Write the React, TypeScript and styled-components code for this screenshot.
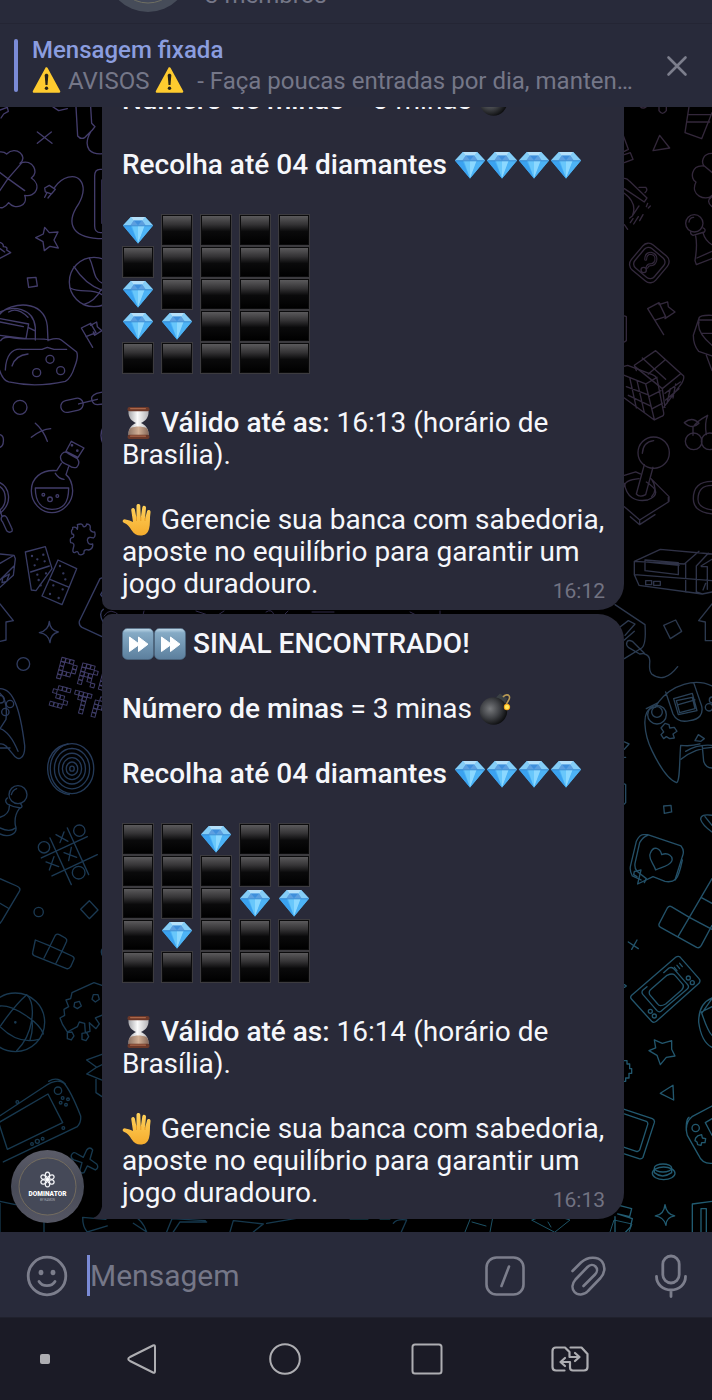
import React from "react";
import styled, { createGlobalStyle } from "styled-components";

const colors = {
  panel: "#282a3a",
  bubble: "#292a39",
  accent: "#7b8bd6",
  accentText: "#8b9ddf",
  muted: "#757788",
  text: "#f6f7fb",
  nav: "#1b1b26",
};

const GlobalStyle = createGlobalStyle`
  * { box-sizing: border-box; }
  html, body { margin: 0; background: #000; }
  body { font-family: Roboto, "Liberation Sans", sans-serif; color: ${colors.text}; }
`;

const Screen = styled.div`
  display: flex;
  flex-direction: column;
  height: 100vh;
  overflow: hidden;
`;

const ChatHeader = styled.header`
  display: flex;
  align-items: flex-end;
  flex: none;
  gap: 15px;
  height: 24px;
  padding-left: 106px;
  overflow: hidden;
  background: ${colors.panel};
  border-bottom: 1px solid #242534;
`;

const HeaderAvatar = styled.svg`
  display: block;
  flex: none;
  width: 84px;
  height: 84px;
  margin-bottom: 11px;
`;

const MemberCount = styled.p`
  margin: 0 0 14px;
  font-size: 24px;
  line-height: 28px;
  color: ${colors.muted};
`;

const Pinned = styled.section`
  display: flex;
  align-items: center;
  flex: none;
  height: 83px;
  padding: 0 23px 0 14px;
  background: ${colors.panel};
`;

const PinnedBar = styled.span`
  flex: none;
  width: 4px;
  height: 53px;
  margin-right: 14px;
  border-radius: 2px;
  background: ${colors.accent};
`;

const PinnedBody = styled.div`
  flex: 1;
  min-width: 0;
`;

const PinnedTitle = styled.h2`
  margin: 0;
  font-size: 24px;
  font-weight: 500;
  line-height: 31px;
  color: ${colors.accentText};
`;

const PinnedText = styled.p`
  margin: 0;
  overflow: hidden;
  font-size: 24px;
  line-height: 31px;
  white-space: pre;
  color: ${colors.muted};
`;

const IconButton = styled.button<{ $size: number }>`
  display: block;
  flex: none;
  width: ${(p) => p.$size}px;
  height: ${(p) => p.$size}px;
  padding: 0;
  border: 0;
  background: none;
  color: #7c7e8c;
  cursor: pointer;

  svg {
    display: block;
    width: 100%;
    height: 100%;
    overflow: visible;
  }
`;

const Chat = styled.main`
  position: relative;
  display: flex;
  flex: 1;
  flex-direction: column;
  justify-content: flex-end;
  min-height: 0;
  overflow: hidden;
  padding: 0 88px 9px 11px;
  background: #000;
`;

const Wallpaper = styled.svg`
  position: absolute;
  inset: 0;
  width: 100%;
  height: 100%;
`;

const MessageRow = styled.article`
  position: relative;
  display: flex;
  flex: none;
  align-items: flex-end;
  gap: 18px;
`;

const AvatarSlot = styled.div`
  flex: none;
  width: 73px;

  svg {
    display: block;
    width: 73px;
    height: 73px;
  }
`;

const Bubble = styled.div<{ $last?: boolean }>`
  position: relative;
  flex: 1;
  min-width: 0;
  max-width: 522px;
  margin-bottom: 4px;
  padding: 14px 16px 10px 20px;
  border-radius: 10px 26px 26px ${(p) => (p.$last ? "0" : "10px")};
  background: ${colors.bubble};
`;

const Tail = styled.svg`
  position: absolute;
  left: -9px;
  bottom: 0;
  width: 10px;
  height: 20px;
`;

const Paragraph = styled.p`
  margin: 0 0 33px;
  font-size: 28px;
  line-height: 32px;

  &:last-of-type {
    margin-bottom: 0;
  }

  strong {
    font-weight: 500;
  }
`;

const Board = styled.div`
  display: grid;
  grid-template-columns: repeat(5, 32px);
  column-gap: 7px;
  margin-bottom: 33px;

  svg {
    display: block;
    width: 32px;
    height: 32px;
  }
`;

const Inline = styled.svg`
  display: inline-block;
  width: 32px;
  height: 32px;
  margin: -4px 0;
  vertical-align: -3px;
`;

const WarningIcon = styled.svg`
  display: inline-block;
  width: 30px;
  height: 28px;
  margin: -3px 0;
  vertical-align: -2px;
`;

const Time = styled.time`
  position: absolute;
  right: 19px;
  bottom: 7px;
  font-size: 21px;
  line-height: 24px;
  color: #727382;
`;

const Composer = styled.form`
  display: flex;
  align-items: center;
  flex: none;
  gap: 43px;
  height: 86px;
  padding: 2px 21px 0 27px;
  background: ${colors.panel};
  border-bottom: 1px solid #20212d;
`;

const Field = styled.div`
  display: flex;
  align-items: center;
  flex: 1;
  min-width: 0;
  margin-left: -23px;
`;

const Caret = styled.span`
  flex: none;
  width: 3px;
  height: 41px;
  background: ${colors.accent};
`;

const Input = styled.input`
  flex: 1;
  min-width: 0;
  height: 41px;
  padding: 0;
  border: 0;
  outline: 0;
  background: none;
  font: 400 30px/40px Roboto, "Liberation Sans", sans-serif;
  color: ${colors.text};

  &::placeholder {
    color: ${colors.muted};
    opacity: 1;
  }
`;

const NavBar = styled.nav`
  display: grid;
  grid-template-columns: 1fr 2fr 2fr 2fr 2fr 1fr;
  flex: none;
  align-items: center;
  justify-items: center;
  height: 82px;
  background: ${colors.nav};

  button {
    color: #aeaeb2;
  }
`;

const NavDot = styled.span`
  width: 10px;
  height: 10px;
  margin-left: 18px;
  border-radius: 2px;
  background: #aeaeb2;
`;

function Gem() {
  return (
    <>
      <path d="M9 3h14l8 8.500-15 18L1 11.500z" fill="#4bb2f6" />
      <path d="M9 3h14l8 8.500H1z" fill="#7cc4f3" />
      <path d="M9 3l2.500 3.500h9L23 3z" fill="#b5e0fa" />
      <path d="M11.500 6.500L8 11.500h8zM20.500 6.500l3.500 5h-8z" fill="#5d9fdf" />
      <path d="M11.500 6.500h9L16 11.500z" fill="#3f8edb" />
      <path d="M9 3l2.500 3.500-3.500 5H1zM23 3l-2.500 3.500 3.500 5h7z" fill="#85cdf6" />
      <path d="M10 12h6v17.500z" fill="#68c7fb" />
      <path d="M16 12h6.500L16 29.500z" fill="#8bd8ff" />
      <path d="M1 11.500h7.500L16 29.500z" fill="#3aa2f0" />
      <path d="M31 11.500h-7.500L16 29.500z" fill="#4db3f5" />
      <path d="M1.500 11.800h29" stroke="#3985cc" strokeWidth=".8" />
    </>
  );
}

function Diamond() {
  return (
    <Inline viewBox="0 0 32 32" role="img" aria-label="diamante">
      <Gem />
    </Inline>
  );
}

function FastForward() {
  return (
    <Inline viewBox="0 0 32 32" role="img" aria-label="avançar">
      <defs>
        <linearGradient id="ff" x2="0" y2="1">
          <stop offset="0" stopColor="#c3dcec" />
          <stop offset=".14" stopColor="#85aac5" />
          <stop offset="1" stopColor="#5c7f9d" />
        </linearGradient>
      </defs>
      <rect x=".5" y=".5" width="31" height="31" rx="5" fill="url(#ff)" stroke="#4d6a83" strokeWidth=".6" />
      <path
        d="M7.500 9v14.500l9-6.500v6.500l9.500-7.300L16.500 9v6.500z"
        fill="#fff"
        stroke="#fff"
        strokeLinejoin="round"
      />
    </Inline>
  );
}

function Bomb() {
  return (
    <Inline viewBox="0 0 32 32" role="img" aria-label="bomba">
      <defs>
        <radialGradient id="bomb" cx=".38" cy=".42" r=".62">
          <stop offset="0" stopColor="#77797c" />
          <stop offset=".55" stopColor="#3f4145" />
          <stop offset="1" stopColor="#0e0f11" />
        </radialGradient>
      </defs>
      <path d="M17 4.500l4-4 7 5-2 6z" fill="#3a4044" />
      <circle cx="14.500" cy="18" r="13.700" fill="url(#bomb)" />
      <path d="M24 4c2-3 7-3 6.500 1-.4 3-4 5-3 8" fill="none" stroke="#b89a54" strokeWidth="1.600" />
      <circle cx="28" cy="14" r="3.200" fill="#f6a71c" />
      <circle cx="28" cy="14" r="2.200" fill="#ffe95c" />
    </Inline>
  );
}

function Hourglass() {
  return (
    <Inline viewBox="0 0 32 32" role="img" aria-label="ampulheta">
      <defs>
        <linearGradient id="glass" x2="1">
          <stop offset="0" stopColor="#a6a6aa" />
          <stop offset=".45" stopColor="#fafafa" />
          <stop offset="1" stopColor="#b5b4b8" />
        </linearGradient>
        <linearGradient id="sand" x2="1">
          <stop offset="0" stopColor="#8f7466" />
          <stop offset=".5" stopColor="#d0ae94" />
          <stop offset="1" stopColor="#87695a" />
        </linearGradient>
      </defs>
      <path d="M6.500 4c-.5 7 3.500 10 7.500 12-4 2-8 5-7.500 12h20c.5-7-3.500-10-7.500-12 4-2 8-5 7.500-12z" fill="url(#glass)" />
      <path d="M6.500 28c-.3-3 .3-5 2-7 5-2 11-2 16 0 1.700 2 2.300 4 2 7z" fill="url(#sand)" />
      <rect x="5.500" y="0" width="22" height="4.200" rx="2" fill="#6b3829" />
      <rect x="8" y="1" width="16" height="1.200" rx=".6" fill="#a9664a" />
      <rect x="5.500" y="27.800" width="22" height="4.200" rx="2" fill="#6b3829" />
      <rect x="8" y="28.600" width="16" height="1.200" rx=".6" fill="#a9664a" />
    </Inline>
  );
}

function Hand() {
  return (
    <Inline viewBox="0 0 32 32" role="img" aria-label="mão levantada">
      <defs>
        <linearGradient id="hand" x2="0" y2="1">
          <stop offset="0" stopColor="#ffd25c" />
          <stop offset="1" stopColor="#f5ac2d" />
        </linearGradient>
      </defs>
      <path
        d="M11 18L9.300 6.500c-.5-3 3-3.500 3.600-.8L14.500 14V2c0-2.600 3.700-2.600 3.800 0l.5 12 1.500-10.500c.4-2.600 4-2 3.700.6L23 15l2-7.500c.7-2.400 4-1.600 3.500.9C27.500 14 28.500 20 27 25c-1.300 4.500-4 6.500-8.500 6.500-4 0-6.500-1.500-8.700-5-2-3-3.500-6-8-7.800-2.300-1-.8-3.700 1.500-3.300C6.500 15.800 9 17 11 18z"
        fill="url(#hand)"
      />
      <path d="M14.500 13v4M18.800 13v4M23 14v3" stroke="#e79b25" strokeWidth=".9" />
    </Inline>
  );
}

function Warning() {
  return (
    <WarningIcon viewBox="0 0 30 28" role="img" aria-label="atenção">
      <path d="M14.500 2.500L2 25.500h25z" fill="#fecb2f" stroke="#fecb2f" strokeWidth="2.600" strokeLinejoin="round" />
      <path d="M12.700 9.500c0-2.200 3.600-2.200 3.600 0L15.500 19h-2z" fill="#26221a" />
      <circle cx="14.500" cy="22.300" r="1.700" fill="#26221a" />
    </WarningIcon>
  );
}

function Tile() {
  return (
    <svg viewBox="0 0 32 32" role="img" aria-label="fechado">
      <defs>
        <linearGradient id="tile" x2="0" y2="1">
          <stop offset="0" stopColor="#5b5a5c" />
          <stop offset=".3" stopColor="#343335" />
          <stop offset=".55" stopColor="#0a0a0b" />
          <stop offset="1" stopColor="#000" />
        </linearGradient>
      </defs>
      <rect x=".5" y=".5" width="31" height="31" fill="#0b0b0c" stroke="#3c3b3f" />
      <rect x="2" y="2" width="28" height="28" fill="url(#tile)" />
    </svg>
  );
}

function GameBoard({ rows }: { rows: string[] }) {
  return (
    <Board>
      {rows.join("").split("").map((cell, i) =>
        cell === "D" ? (
          <svg key={i} viewBox="0 0 32 32" role="img" aria-label="diamante">
            <Gem />
          </svg>
        ) : (
          <Tile key={i} />
        )
      )}
    </Board>
  );
}

function ChannelAvatar() {
  return (
    <svg viewBox="0 0 73 73" role="img" aria-label="Dominator">
      <defs>
        <linearGradient id="avatar" x2="0" y2="1">
          <stop offset="0" stopColor="#5b5c68" />
          <stop offset=".5" stopColor="#474a57" />
          <stop offset="1" stopColor="#555663" />
        </linearGradient>
      </defs>
      <circle cx="36.500" cy="36.500" r="36.500" fill="url(#avatar)" />
      <circle cx="36.500" cy="36.500" r="28.500" fill="#454958" stroke="#7d735f" strokeWidth=".8" />
      <g fill="none" stroke="#f2f3f6" strokeWidth="1.200">
        {[0, 60, 120, 180, 240, 300].map((a) => (
          <ellipse key={a} cx="36.500" cy="25.500" rx="2.300" ry="3.300" transform={`rotate(${a} 36.500 29.500)`} />
        ))}
      </g>
      <circle cx="36.500" cy="29.500" r="1.200" fill="#fff" />
      <text
        x="36.500"
        y="45.500"
        textAnchor="middle"
        fill="#fff"
        fontFamily="Roboto, sans-serif"
        fontSize="6.500"
        fontWeight="900"
      >
        DOMINATOR
      </text>
      <text x="36.500" y="50.500" textAnchor="middle" fill="#a9abb5" fontFamily="Roboto, sans-serif" fontSize="3">
        BY RAMON
      </text>
    </svg>
  );
}

/* Pixel letters of the "PRESS START" doodle. */
const pixelLetters: { x: number; y: number; rows: string[] }[] = [
  { x: 0, y: 0, rows: ["1110", "1001", "1001", "1110", "1000"] },
  { x: 5, y: 0, rows: ["1110", "1001", "1110", "1010", "1001"] },
  { x: 10, y: 0, rows: ["111", "100", "110", "100", "111"] },
  { x: 0, y: 6.5, rows: ["0111", "1000", "0110", "0001", "1110"] },
  { x: 5, y: 6.5, rows: ["1111", "0110", "0010", "0010", "0010"] },
  { x: 10, y: 6.5, rows: ["0110", "1001", "1111", "1001", "1001"] },
];

function Doodles() {
  return (
    <Wallpaper viewBox="0 107 712 1125" preserveAspectRatio="xMidYMax slice" aria-hidden="true">
      <defs>
        {[
          ["l1", "#433c6b", "#413c69"],
          ["l2", "#413c69", "#1b3953"],
          ["l3", "#1b3953", "#15384d"],
          ["r1", "#33273a", "#322a3e"],
          ["r2", "#322a3e", "#235068"],
          ["r3", "#235068", "#215c72"],
        ].map(([id, from, to]) => (
          <linearGradient key={id} id={id} gradientUnits="userSpaceOnUse" x1="0" y1="0" x2="0" y2="1140">
            <stop offset="0" stopColor={from} />
            <stop offset="1" stopColor={to} />
          </linearGradient>
        ))}
      </defs>
      <g fill="none" strokeWidth="4" strokeLinejoin="round" strokeLinecap="round">
        <g stroke="url(#l1)" transform="translate(0 100) scale(.3333)">
          <path d="M0 30l22-8 3 12-14 8-8 12M158 20l18 12 26-6M228 20l5 88q10 12 22 4l22-22 8-10-10-10-3-50M272 96c-14 24-14 40-4 54q16 18 60 8" />
          <path d="M112 96l44 34M154 96l-42 34" />
          <path d="M-10 236c-60-60 8-96 30-74 28-28 66 8 40 28 40-16 58 30 34 44 32 20 14 60-20 52 12 32-30 46-48 22-24 34-50 4-36-20M24 236l40-46M24 236l50 36M24 236l-34-26M24 236l-30 44" />
          <path d="M134 264l14-8 18 12-12 14-18-6zM140 280l-6 12M152 284l-8 10M164 262c24-34 60-40 76-22 18 22 8 50-4 72-44 64-14 104 74 104M320 208h-20q-16 0-16 20v150q0 20 18 20h18M320 240h-14v130h14" />
          <path d="M134 382l14 16 26-2-12 24 13 24-25-5-17 13-4-27-22-12 23-11z" />
          <path d="M-4 426q16 4 14 14 14 0 10 10l12 8-34 18M0 446l14 10M82 534l26-2 4 26-26 4z" />
          <circle cx="282" cy="546" r="74" />
          <path d="M222 500c20 32 46 58 86 72M268 474c16 30 10 64 40 76M210 564c36 18 64-2 96 20M250 614q36-10 54-46" />
          <path d="M0 642c32-36 134-46 142 36l2 44M0 636c36-20 100-14 106 46v38M26 636c16-10 36-6 58 16M0 656l86 16-8 44-78-10M0 666l70 14M84 682l20 10M2 722q6-12 28-10c50 10 90 0 118 8q24-8 36 0l46 36q6 14-6 44-10 34-28 44-90 20-170 2-20-6-30-44M16 810c2-44 20-66 50-62h60l16-6 20 6h38M36 798q10-32 48-36" />
          <circle cx="150" cy="778" r="12" />
          <circle cx="110" cy="818" r="12" />
          <circle cx="182" cy="812" r="12" />
          <path d="M278 742l-34-58 28-14 16 28-30 12M272 676l18-10 2 14 14 12-22 14-4-10" />
          <circle cx="60" cy="922" r="21" />
          <rect x="182" y="898" width="68" height="36" rx="18" transform="rotate(-12 216 916)" />
          <path d="M236 912l56-14M310 876l-20 4q-22 8-12 26 4 8 14 8l18-2M94 1012q30-24 58-26M106 970q24 20 36 54M310 980q-14 26 0 54M0 1004q12 4 10 20 0 14-10 18" />
          <path d="M214 1024l38 20-18 28-36-18zM182 1068q8-18 22-8l28 16q10 14-2 26-12 4-24-6-28-8-24-28M184 1090l-14 22M206 1100l-8 24M170 1112c-48-4-76 24-76 60s28 66 62 66 62-32 62-66q-2-34-20-48M106 1164h100c0 50-20 64-50 64s-50-20-50-64M166 1120q10 16 26 18" />
          <circle cx="216" cy="1036" r="2" />
          <circle cx="232" cy="1052" r="2" />
          <circle cx="130" cy="1184" r="4" />
          <circle cx="150" cy="1198" r="7" />
          <circle cx="172" cy="1188" r="4" />
          <path d="M0 1148c28 14 40 60 0 92M0 1160c18 12 24 50 0 70" />
        </g>
        <g stroke="url(#l2)" transform="translate(0 480) scale(.3333)">
          <path d="M0 90l6 20M6 110q-6 8 2 16l12 26q8 8 16 2 2-6-2-12l-14-30q-6-8-14-2M218 142q12-2 14 6 2-8 0-14 16-6 18 6 8 2 10-8 14 0 10 16 4 10 14 8 4 14-4 18-16-6-18 6 2 16 16 12 2 14-12 18-16-4-14 10-8 8-16 2-2-12-12-4-8 0-4-14 6-16-8-16-4-16 8-16 4-10-4-10-4-12 2-14z" />
          <path d="M76 216l60-16 20 66-48 66-14-2zM92 276l56-18M174 240l56 26-44 108-60-26zM150 298l58 24M0 222l42 4 4 10-6 50-40 36M0 250l38-22M0 300l42-42M8 294l20-12-8 22-14 4zM0 372l40 50-22 4v54l-18 4M310 292l-10 4-62 128q-2 12 8 18l60 28M310 330l-8 14 8 10M310 388q-16 12 0 40" />
          {[[96, 228], [112, 238], [130, 224], [104, 256], [134, 244], [112, 284], [116, 300], [138, 280], [122, 316], [180, 258], [190, 280], [196, 298], [160, 316], [188, 328], [150, 342], [176, 354]].map(([x, y]) => (
            <circle key={`${x}-${y}`} cx={x} cy={y} r="1.500" />
          ))}
          <path d="M148 424q2 28 27 32-24 6-25 32-4-26-32-30 28-6 30-34z" />
          <circle cx="70" cy="552" r="19" />
          <g transform="translate(186 532) rotate(15)" strokeWidth="3">
            {pixelLetters.map((l) =>
              l.rows.map((row, r) =>
                row
                  .split("")
                  .map((c, i) =>
                    c === "1" ? (
                      <rect
                        key={`${l.x}-${l.y}-${r}-${i}`}
                        x={(l.x + i) * 13}
                        y={(l.y + r) * 13}
                        width="12"
                        height="12"
                        strokeWidth="3"
                      />
                    ) : null
                  )
              )
            )}
          </g>
          <path d="M0 626c40 0 60 60 74 170 2 40-20 50-34 28L18 798q-10-8-18-6M0 640q24 20 18 78l-18 28M0 746q30 10 54 68M0 804q18 0 30 0" />
          <circle cx="30" cy="672" r="11" />
          <circle cx="16" cy="696" r="11" />
          <circle cx="2" cy="658" r="11" />
          {[68, 55, 42, 30, 18, 7].map((r) => (
            <ellipse key={r} cx="216" cy="866" rx={r * 0.96} ry={r * 1.1} />
          ))}
          <path d="M204 792c-84 12-80 140 4 152" />
          <circle cx="54" cy="944" r="27" />
          <path d="M34 944q4-14 16-18M22 954q-10 8 0 18 18 10 40 12 8-4 0-12M28 974c2 24-14 34-28 38M58 986c-14 18-14 36-12 50 10 26-20 38-46 26M0 1044q30 14 46 0" />
          <circle cx="238" cy="1052" r="17" />
          <circle cx="132" cy="1102" r="17" />
          <circle cx="236" cy="1178" r="19" />
          <path d="M150 1074l64 140M202 1044l64 140M124 1134l138-64M156 1188l136-64M168 1064l36 20M180 1088l12-32M192 1118l38 14M206 1142l8-40M138 1146l38 14M148 1170l14-40" />
        </g>
        <g stroke="url(#l3)" transform="translate(0 860) scale(.3333)">
          <path d="M0 56l50 22q14 6 8 16L6 182l-6 8M0 130l24 14" />
          <circle cx="116" cy="156" r="14" />
          <path d="M268 122l26 28-26 26-26-28zM106 240l44 18 16-32q6-6 12-2l18 10q6 4 4 10l-14 30 30 14q8 4 6 10l-10 22q-6 8-12 6l-96-38q-8-4-6-10zM150 258l-18 36M186 274l-18 36M150 258l36 16M310 262q-12 14 0 28" />
          <circle cx="46" cy="487" r="88" />
          <path d="M0 438c40-4 120 50 130 84M80 404c30 30 20 120-30 168M0 500c30-44 50-70 80-96M0 500c40 40 80 48 116 38M96 480q4 30-6 60" />
          <circle cx="46" cy="487" r="2" />
          <path d="M310 378l-28-10-66 30-4 18-14 4 8 20-14 8 2 18-14 8 8 20 14 22 30-16 6-14 16 4 2 28 14-4-2-26 20 18 10-14-12-18 30-12 6 24M224 428l14-4 6 14-12 8-10-6zM280 404l14 0 4 14-12 8-10-8zM202 518l14-2 6 12-8 12-12-4zM246 520l14-2 6 12-8 12-12-4zM310 582l-50 18 30 22 20-10M290 622l-30 20 50 20M288 658v40l18 12" />
          <path d="M-10 774l140-92q40-30 62-12 20 22 50 98 2 20-10 32L10 906M-4 788l148-86 44 86L22 868zM146 664q26-16 50 8" />
          <circle cx="174" cy="692" r="11" />
          {[[188, 714], [204, 718], [182, 728], [198, 734], [52, 726], [190, 804], [96, 852], [128, 836]].map(([x, y]) => (
            <circle key={`${x}-${y}`} cx={x} cy={y} r="4" />
          ))}
          <circle cx="112" cy="844" r="6" />
          <path d="M214 886q6-14 18-4l18 10 10-22q10-12 18 0l-8 28 20 14q8 12-4 18l-24-12-10 20q-12 4-12-8l6-22-24-8q-10-4-8-14M0 1024l46 10M0 1030v86M132 1080v36M248 1072q0 30 14 44l60-18M248 1072l70 6M310 1040q110 10 130 76M400 1090l40 26M500 1116l16-40 100 6M520 1116l20-30h80M690 1116l10-34 90 10-30 24M800 1090l120-20M1180 1090q10-14 40-10l-16 36" />
        </g>
        <path
          stroke="#302b4b"
          strokeWidth="1"
          d="M104 616q6-10 16 0M144 611l-1 4M196 611l12 4M224 611l-6 4M266 612q6-4 8 3M288 611l-4 4M312 612h22M410 612l6 3M440 611v4"
        />
        <path
          stroke="#1d5265"
          strokeWidth="1"
          d="M465 1232l8-20 20 4-3 16M472 1222l14 4M532 1220l18-6 20 6-15 12zM548 1222l3 5M610 1232l4-12 18 4-3 8M350 1219h18M380 1219h10"
        />
        <g stroke="url(#r1)" transform="translate(615 100) scale(.3333)">
          <path d="M76 20q8 8 18 0M132 20v12q10 16 22 0V20M222 20l-12 78 50 18 31-78M222 44h66M216 66h68M134 106l30 38-50 8zM24 104l16 44-12 6M28 164l18-6 8 20-26 10M24 236q10-4 20 8l52 50-8 12-60-40M72 262l20 0q8 8-2 16M28 280q40 30 24 68l20-30M52 348l-8 6M54 356l-8 12M70 350l-14 22M84 344l-10 18M98 310l-4 10M106 318l-6 6M28 374l10 14" />
          <path d="M291 160c-30 0-32 28-24 38-40-4-42 40-24 48-20 40 30 60 48 40M268 198l24 20M291 290q-20 14 0 30" />
          <circle cx="238" cy="370" r="26" />
          <path d="M222 366q2-14 14-14M228 394q-4 8 6 12l34-10q6-8-4-12M242 408c6 30 2 46-2 74l4 12 47-18M264 398q6 24 27 36M246 474l45-20" />
          <rect x="55" y="440" width="96" height="98" rx="22" transform="rotate(40 103 489)" />
          <rect x="65" y="451" width="76" height="76" rx="16" transform="rotate(40 103 489)" />
          <path d="M92 478q0-18 16-18 18 4 14 22-4 14-16 12-8 0-10 8" strokeWidth="9" />
          <path d="M92 478q0-18 16-18 18 4 14 22-4 14-16 12-8 0-10 8" stroke="#000" strokeWidth="2.500" />
          <circle cx="86" cy="510" r="8" />
          <path d="M146 704l-48-78 34-18 20 42-30 10M132 614l26-8 2 14 20 16-30 20M28 648l6 2v72l-6 4" />
          <path d="M58 796l64-44 84 76q2 8-6 22L146 922M58 796l6 16M100 822l50-42M82 774l70 64M142 866l54-44M60 800l82 66 8 56M150 880l46-34M152 900l40-34M166 866l-10 44M182 852l-8 42" />
          <path d="M24 800l14-4 74 28q10 4 14 12l20 102q2 10-8 12l-20 10-90-66M92 852l34-20M92 852l26 106M28 826l64 26M34 860l64 24M40 886l66 32M44 832l20 92M66 842l22 96M102 890l36-18M112 926l30-16" />
          <path d="M291 646q-40-2-40 12l-16 48q0 30 16 48l40 14M252 660h39M252 666q-8 30 39 70M262 700h29M274 766l17 46" />
          <circle cx="236" cy="1024" r="25" />
          <circle cx="284" cy="1024" r="25" />
          <path d="M234 1006v-24q10-18 44-36-10 24-4 58M208 968q24-20 44 2-20 20-44-2" />
          <circle cx="116" cy="1058" r="47" />
          <path d="M82 1060q2-34 34-38M88 1094l-24 88q10 12 28 2l22-82M28 1126l34-10 14 6M108 1136l54 54v14M28 1160q0-20 44-24M110 1138q20 30 0 52" />
          <path d="M291 1144q-56 0-56 52 0 40 56 46M291 1156q-42 0-42 42 0 26 42 32" />
        </g>
        <g stroke="url(#r2)" transform="translate(615 480) scale(.3333)">
          <path d="M28 10q10 60 70 50 50-20-4-54M28 80l46 40 86-54V52M74 120v14l-28-24M74 134l46-30" />
          <path d="M58 244l78-36 155 14M58 244v40l14 32 190 26 29-6M58 244l150 8 44-38M212 250v86M244 258v78l18 6M244 258l36-38M90 240l100 8v36L90 272zM98 246l94 10M58 284l186 14 47 4M92 302h18v12H92zM116 304h20v12h-20zM258 258l33-20M260 260h17v68M264 330l8-20" />
          <path d="M0 374l90 60q4 60-10 70l-52 32M14 442l26-20 20 10-30 34M28 480l30-26M36 486q4-8 16-2l36 36-14 2-34-20q-8-8-4-16M88 522c32 10 4 40 22 60q38 30 78-22" />
          <path d="M146 436l36-16 18 34-34 22zM291 372l-40 50 20 4v56h20M28 786l14 6-14 16M28 832h4M28 912l4 2v54l-4 4" />
          <path d="M291 618c-50-24-120-6-162 50q-6 12-8 14c-50 0-30 90-10 130 26 54 50 88 74 96 10-4 8-60 12-112q30 4 58-4M152 636l22 66q14 28 50 20 44-6 36-44L236 608M176 656l56-16 14 52-56 12zM184 662l48-10 8 34-46 12zM190 674l50-14M94 686l36-18" />
          <circle cx="126" cy="704" r="28" />
          <circle cx="126" cy="696" r="16" />
          <path d="M150 730l12 4 2 10 14-2 8 12-12 8 4 12-14 2-10-6-8 6-8-12 8-8-8-12zM240 782l10-18 18 12-10 8zM198 838q40-34 93-36M212 814q36-22 79-18M262 800l4 44q6 20 25 20" />
          <circle cx="282" cy="682" r="11" />
          <circle cx="292" cy="660" r="9" />
          <path d="M146 978l22-2 2 20-22 4zM291 1006q-34-6-34 12 4 16 34 38M270 1010l21 26M84 1064h14l100 34q12 14 4 32l-22 70M84 1064q-10 0-20 20l-18 76q-2 14 6 28l26 12M98 1066q-14 4-24 22l-14 62q-2 16 6 24l28 22-6 12M106 1120c10-26 30-14 34 4 20-8 36 6 30 20-6 14-30 18-48 26-6-20-24-34-16-50z" />
        </g>
        <g stroke="url(#r3)" transform="translate(615 860) scale(.3333)">
          <path d="M60 34l18-4-10 42 46-22 36 14q20 4 32-6 10-10 20-58M58 34l-2 10 10 6" />
          <path d="M291 56l-68 116-54-32q-6-4-12 4l-24 46q-4 8 4 12l108 60q8 4 14-6l32-60M223 172l-34 58M223 172l68 36M258 112l33 18M40 246l30 20M50 268l16-28" />
          <path d="M182 292q8-6 14 0l56 64q6 6 0 14L124 484q-8 6-14 0l-60-66q-6-6 0-12zM146 338l16-14q8-4 14 2l42 48q6 8-2 14l-78 66q-6 4-12-2l-42-48q-6-8 0-14l12-10" />
          <path d="M156 346q18-8 24 0l24 28q4 8-4 16l-48 42q-18 10-24 0l-24-28q-4-10 4-16zM178 322l8 10M186 316l8 10M194 310l8 10" />
          <circle cx="220" cy="354" r="6" />
          <circle cx="232" cy="368" r="6" />
          <circle cx="106" cy="454" r="6" />
          <circle cx="118" cy="468" r="6" />
          <path d="M291 414q-40 16-40 72 8 60 40 76M291 440l-32 16q20 60 32 70M260 460l31-44M118 540l24 10 28-8 0 26 10 20-26 4-18 22-10-28-24-14 20-8zM136 700l38-24 2 44zM28 374l6 4-6 4M28 602h8v10h8v14h6v14h-8v14h-10v10h-4" />
          <path d="M28 748l84 28q8 4 6 12l-34 104q-4 6-12 4l-44-14M28 762l66 22q6 4 4 10l-24 76q-4 6-10 4l-36-12M291 738l-60 32q-24 20-14 56l34 60q10 26 40 24M222 772q-10 6-8 40M291 776l-20 12 20 38" />
          <circle cx="242" cy="804" r="11" />
          <path d="M248 828l12-4 2 10 10 2-2 12-10 0-2 8-10-2-2-8-6-4 2-8z" />
          <ellipse cx="144" cy="924" rx="26" ry="12" />
          <path d="M118 926v12q24 20 52 0v-12" />
          <ellipse cx="146" cy="940" rx="34" ry="19" />
          <path d="M150 1034q4 28 29 34-26 4-26 28-6-24-32-28 26-4 29-34zM232 1116v-84l59-8M258 1116v-70h16v70M12 1036l38 10-6 24-36-8M8 1062l44 14-6 26-14 14M0 1070v46" />
        </g>
      </g>
    </Wallpaper>
  );
}

interface Signal {
  rows: string[];
  validUntil: string;
  sentAt: string;
}

const signals: Signal[] = [
  { rows: ["D....", ".....", "D....", "DD...", "....."], validUntil: "16:13", sentAt: "16:12" },
  { rows: ["..D..", ".....", "...DD", ".D...", "....."], validUntil: "16:14", sentAt: "16:13" },
];

function SignalMessage({ signal, last }: { signal: Signal; last: boolean }) {
  return (
    <MessageRow>
      <AvatarSlot>{last && <ChannelAvatar />}</AvatarSlot>
      <Bubble $last={last}>
        {last && (
          <Tail viewBox="0 0 10 20" aria-hidden="true">
            <path d="M10 0C9.500 10 7 16 1 18.500c-1 .8-.5 1.500 1 1.500h8z" fill={colors.bubble} />
          </Tail>
        )}
        <Paragraph>
          <FastForward />
          <FastForward /> <strong>SINAL ENCONTRADO!</strong>
        </Paragraph>
        <Paragraph>
          <strong>Número de minas</strong> = 3 minas <Bomb />
        </Paragraph>
        <Paragraph>
          <strong>Recolha até 04 diamantes</strong> <Diamond />
          <Diamond />
          <Diamond />
          <Diamond />
        </Paragraph>
        <GameBoard rows={signal.rows} />
        <Paragraph>
          <Hourglass /> <strong>Válido até as:</strong> {signal.validUntil} (horário de Brasília).
        </Paragraph>
        <Paragraph>
          <Hand /> Gerencie sua banca com sabedoria, aposte no equilíbrio para garantir um jogo duradouro.
        </Paragraph>
        <Time>{signal.sentAt}</Time>
      </Bubble>
    </MessageRow>
  );
}

export default function App() {
  return (
    <Screen>
      <GlobalStyle />
      <ChatHeader>
        <HeaderAvatar viewBox="0 0 84 84" aria-hidden="true">
          <circle cx="42" cy="42" r="42" fill="#464c59" />
          <circle cx="42" cy="42" r="33" fill="#42485a" stroke="#6f6f62" />
        </HeaderAvatar>
        <MemberCount>3 membros</MemberCount>
      </ChatHeader>
      <Pinned>
        <PinnedBar />
        <PinnedBody>
          <PinnedTitle>Mensagem fixada</PinnedTitle>
          <PinnedText>
            <Warning /> AVISOS <Warning />
            {"  - Faça poucas entradas por dia, manten…"}
          </PinnedText>
        </PinnedBody>
        <IconButton type="button" $size={24} aria-label="Fechar">
          <svg viewBox="0 0 24 24" fill="none" stroke="currentColor" strokeWidth="2.600" strokeLinecap="round">
            <path d="M3.500 3.500l17 17M20.500 3.500l-17 17" />
          </svg>
        </IconButton>
      </Pinned>
      <Chat>
        <Doodles />
        {signals.map((s, i) => (
          <SignalMessage key={s.sentAt} signal={s} last={i === signals.length - 1} />
        ))}
      </Chat>
      <Composer onSubmit={(e) => e.preventDefault()}>
        <IconButton type="button" $size={40} aria-label="Emoji">
          <svg viewBox="0 0 40 40" fill="none" stroke="currentColor" strokeWidth="2.800" strokeLinecap="round">
            <circle cx="20" cy="20" r="18.800" />
            <path d="M12 25.500c3.500 5.600 12.500 5.600 16 0" />
            <ellipse cx="14" cy="16.500" rx="2.400" ry="2.800" fill="currentColor" stroke="none" />
            <ellipse cx="26" cy="16.500" rx="2.400" ry="2.800" fill="currentColor" stroke="none" />
          </svg>
        </IconButton>
        <Field>
          <Caret />
          <Input type="text" placeholder="Mensagem" aria-label="Mensagem" />
        </Field>
        <IconButton type="button" $size={40} aria-label="Comandos">
          <svg viewBox="0 0 40 40" fill="none" stroke="currentColor" strokeWidth="2.600" strokeLinecap="round">
            <rect x="1.500" y="1.500" width="37" height="37" rx="10" />
            <path d="M24 10.500l-7.500 19.500" />
          </svg>
        </IconButton>
        <IconButton type="button" $size={40} aria-label="Anexar">
          <svg
            viewBox="0 0 40 40"
            fill="none"
            stroke="currentColor"
            strokeWidth="2.600"
            strokeLinecap="round"
            strokeLinejoin="round"
          >
            <path d="M4.500 15L13 6.500C20 0 30 .5 34 5.500c4 5.500 2.500 12-1.500 16.500L20 35c-4 4.500-10.500 4.500-13.500 1-3-3.500-2.500-8.500 1-12.500l12-12.500c2.500-2.500 6-2.500 8-.5s2 5.500-.5 8L15.500 30" />
          </svg>
        </IconButton>
        <IconButton type="button" $size={40} aria-label="Gravar áudio">
          <svg viewBox="0 0 40 40" fill="none" stroke="currentColor" strokeWidth="2.800" strokeLinecap="round">
            <rect x="11.800" y="0" width="16.400" height="27" rx="8.200" />
            <path d="M5.500 20.500c0 8 6.500 13.500 14.500 13.500s14.500-5.500 14.500-13.500M20 34v6.500" />
          </svg>
        </IconButton>
      </Composer>
      <NavBar aria-label="Sistema">
        <NavDot />
        <IconButton type="button" $size={32} aria-label="Voltar">
          <svg viewBox="0 0 32 32" fill="none" stroke="currentColor" strokeWidth="2" strokeLinejoin="round">
            <path d="M27 2.500Q29 1.500 29 4v24q0 2.500-2 1.500L4 18q-3.500-2 0-4z" />
          </svg>
        </IconButton>
        <IconButton type="button" $size={32} aria-label="Início">
          <svg viewBox="0 0 32 32" fill="none" stroke="currentColor" strokeWidth="2">
            <circle cx="16" cy="16" r="14.800" />
          </svg>
        </IconButton>
        <IconButton type="button" $size={32} aria-label="Recentes">
          <svg viewBox="0 0 32 32" fill="none" stroke="currentColor" strokeWidth="2">
            <rect x="1.500" y="1.500" width="29" height="29" rx="2.500" />
          </svg>
        </IconButton>
        <IconButton type="button" $size={38} aria-label="Alternar tela">
          <svg
            viewBox="0 0 38 38"
            fill="none"
            stroke="currentColor"
            strokeWidth="2.200"
            strokeLinecap="round"
            strokeLinejoin="round"
          >
            <path d="M13.500 30.500H5q-3.500 0-3.500-3.500V11q0-3.500 3.500-3.500h9l4.500 4.500v5h9.500M24 13l4.500 4-4.500 4" />
            <path d="M19.500 7.500H30.500l6 6.500V27q0 3.500-3.500 3.500H22q-3 0-3-3V22H9.500M14 18l-4.500 4 4.500 4" />
          </svg>
        </IconButton>
      </NavBar>
    </Screen>
  );
}
